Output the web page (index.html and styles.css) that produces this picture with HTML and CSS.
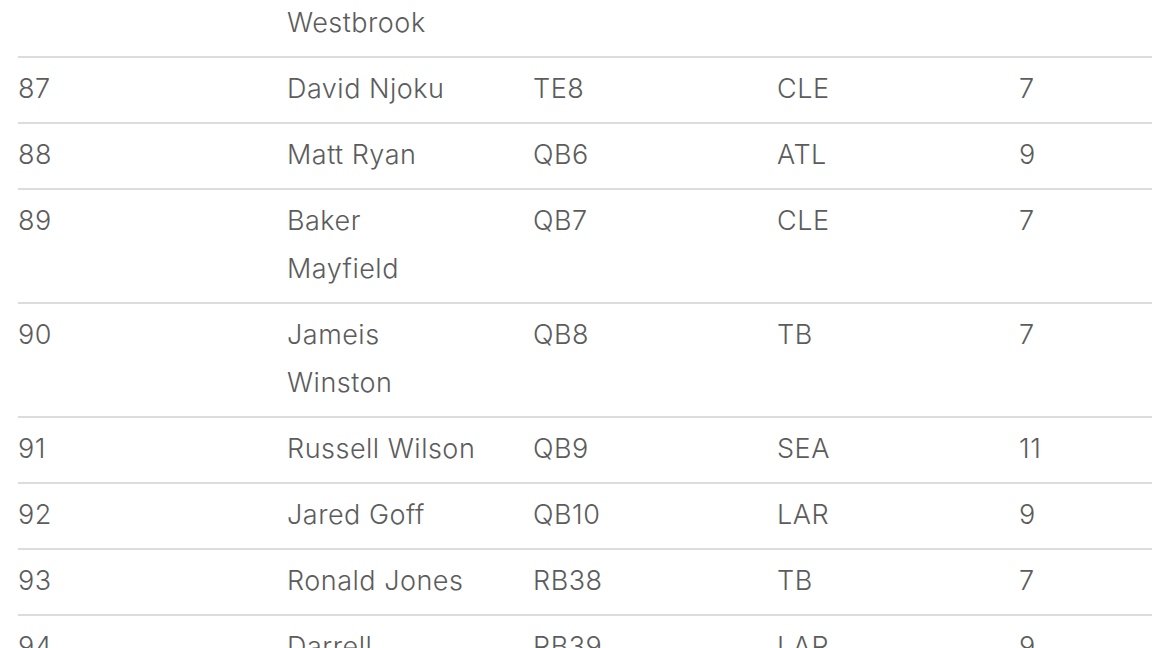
FILE: index.html
```html
<!DOCTYPE html>
<html lang="en">
<head>
<meta charset="utf-8">
<title>Rankings</title>
<link rel="stylesheet" href="styles.css">
</head>
<body>
<div class="scroller">
<table class="rankings">
  <colgroup>
    <col class="c-rank"><col class="c-name"><col class="c-pos"><col class="c-team"><col class="c-bye">
  </colgroup>
  <tbody>
    <tr><td>86</td><td>Dede Westbrook</td><td>WR33</td><td>JAX</td><td>10</td></tr>
    <tr><td>87</td><td>David Njoku</td><td>TE8</td><td>CLE</td><td>7</td></tr>
    <tr><td>88</td><td>Matt Ryan</td><td>QB6</td><td>ATL</td><td>9</td></tr>
    <tr><td>89</td><td>Baker Mayfield</td><td>QB7</td><td>CLE</td><td>7</td></tr>
    <tr><td>90</td><td>Jameis Winston</td><td>QB8</td><td>TB</td><td>7</td></tr>
    <tr><td>91</td><td>Russell Wilson</td><td>QB9</td><td>SEA</td><td>11</td></tr>
    <tr><td>92</td><td>Jared Goff</td><td>QB10</td><td>LAR</td><td>9</td></tr>
    <tr><td>93</td><td>Ronald Jones</td><td>RB38</td><td>TB</td><td>7</td></tr>
    <tr><td>94</td><td>Darrell Henderson</td><td>RB39</td><td>LAR</td><td>9</td></tr>
  </tbody>
</table>
</div>
</body>
</html>
```
FILE: styles.css
```css
html, body {
  margin: 0;
  padding: 0;
  background: #ffffff;
  overflow: hidden;
}
.scroller {
  margin-top: -56px;
  padding-left: 18px;
}
.rankings {
  width: 1134px;
  border-collapse: collapse;
  table-layout: fixed;
  font-family: Inter, Roboto, "Liberation Sans", sans-serif;
  font-weight: 300;
  font-size: 27px;
  letter-spacing: 0.5px;
  color: #5c5c5c;
}
.c-rank { width: 269px; }
.c-name { width: 246px; }
.c-pos { width: 244px; }
.c-team { width: 242px; }
.c-bye { width: 133px; }
.rankings td {
  padding: 7px 55px 9px 0;
  line-height: 48px;
  vertical-align: top;
  border-bottom: 2px solid #dcdcdc;
}
```
